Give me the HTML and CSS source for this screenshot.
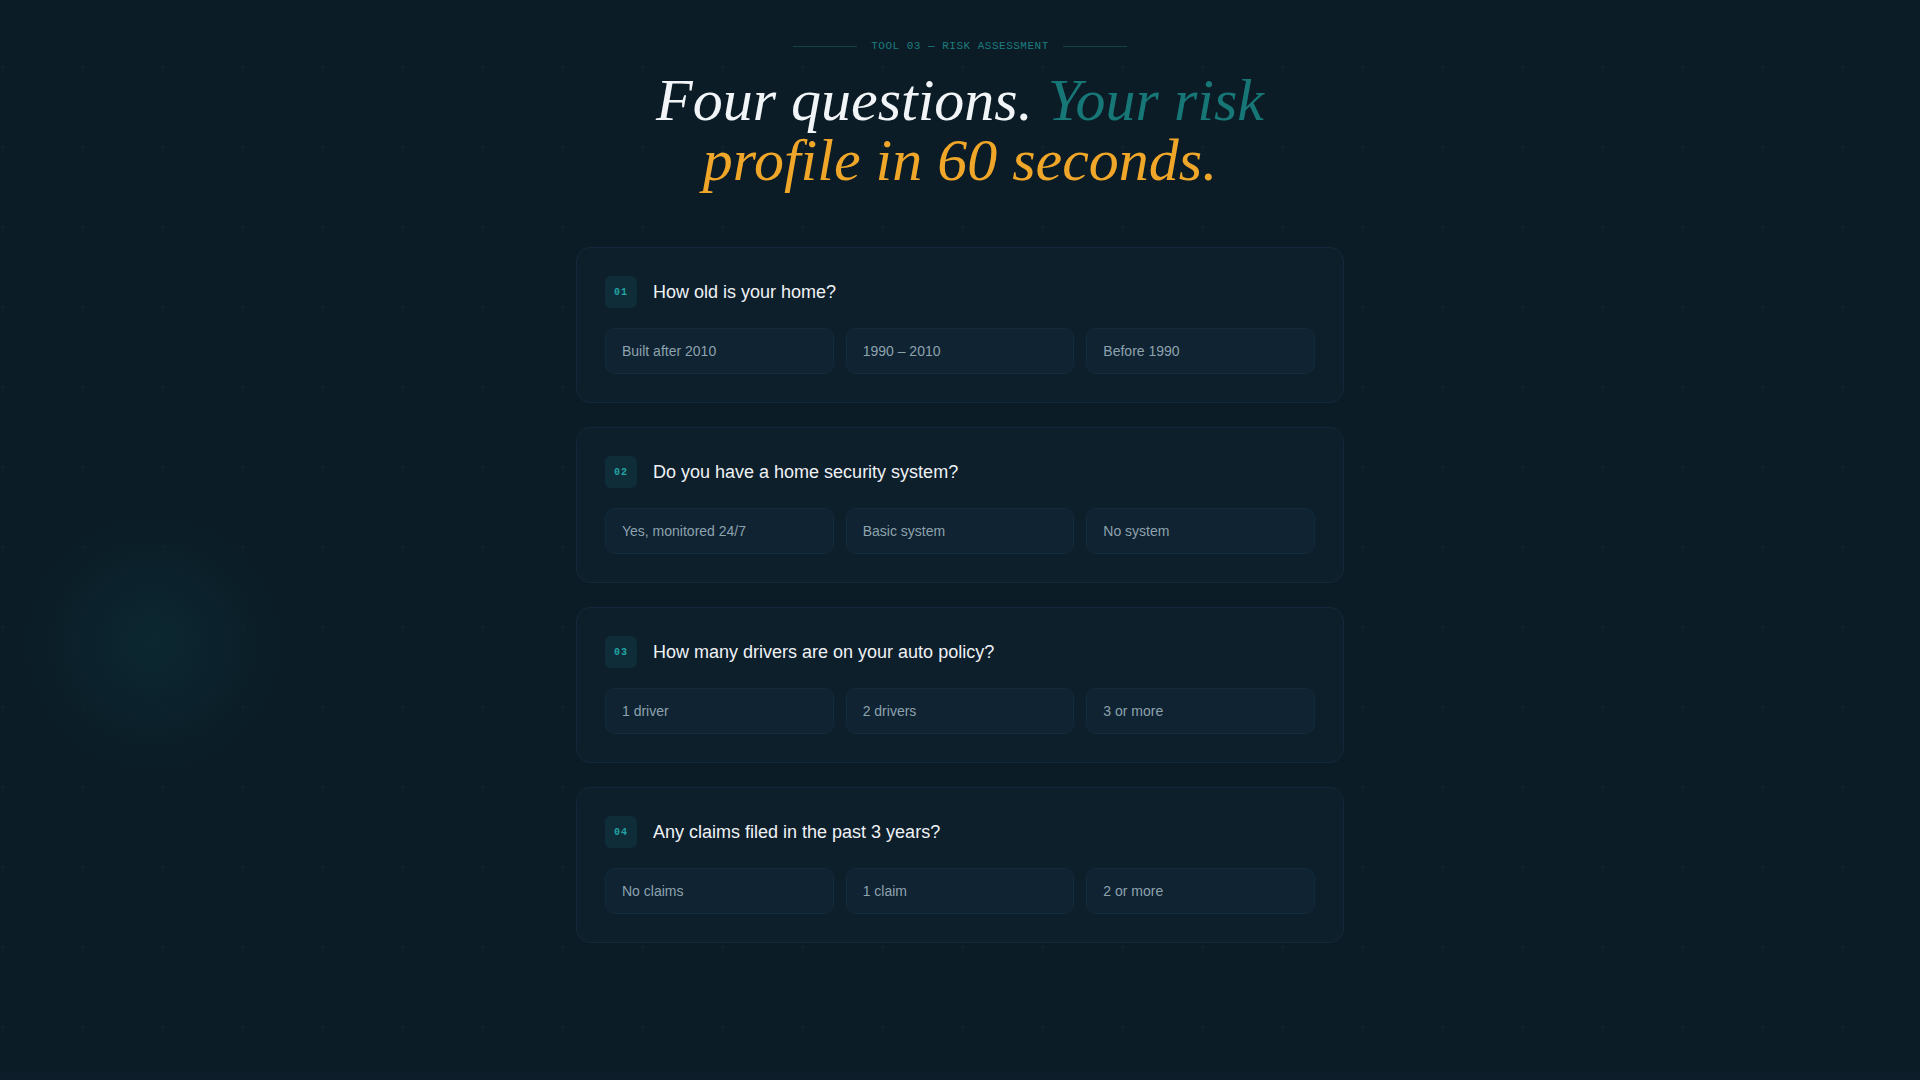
FILE: index.html
```html
<!DOCTYPE html>
<html lang="en">
<head>
<meta charset="utf-8">
<title>Risk Assessment</title>
<link rel="stylesheet" href="styles.css">
</head>
<body>
<div class="glow"></div>
<main class="page">
  <div class="eyebrow">
    <span class="eyebrow-line"></span>
    <span class="eyebrow-text">TOOL 03 — RISK ASSESSMENT</span>
    <span class="eyebrow-line"></span>
  </div>
  <h1 class="title">Four questions. <span class="teal">Your risk</span><br><span class="amber">profile in 60 seconds.</span></h1>

  <section class="quiz">
    <div class="card">
      <div class="card-head">
        <span class="badge">01</span>
        <h2 class="question">How old is your home?</h2>
      </div>
      <div class="options">
        <button class="option">Built after 2010</button>
        <button class="option">1990 – 2010</button>
        <button class="option">Before 1990</button>
      </div>
    </div>

    <div class="card">
      <div class="card-head">
        <span class="badge">02</span>
        <h2 class="question">Do you have a home security system?</h2>
      </div>
      <div class="options">
        <button class="option">Yes, monitored 24/7</button>
        <button class="option">Basic system</button>
        <button class="option">No system</button>
      </div>
    </div>

    <div class="card">
      <div class="card-head">
        <span class="badge">03</span>
        <h2 class="question">How many drivers are on your auto policy?</h2>
      </div>
      <div class="options">
        <button class="option">1 driver</button>
        <button class="option">2 drivers</button>
        <button class="option">3 or more</button>
      </div>
    </div>

    <div class="card">
      <div class="card-head">
        <span class="badge">04</span>
        <h2 class="question">Any claims filed in the past 3 years?</h2>
      </div>
      <div class="options">
        <button class="option">No claims</button>
        <button class="option">1 claim</button>
        <button class="option">2 or more</button>
      </div>
    </div>
  </section>
</main>
</body>
</html>
```

FILE: styles.css
```css
html {
  background: #0d1e2a;
}

body {
  margin: 0;
  min-height: 1072px;
  background-color: #0b1c26;
  background-image: radial-gradient(circle, rgba(40, 70, 85, 0.16) 1.2px, transparent 1.8px);
  background-size: 80px 80px;
  background-position: -37px 27px;
  font-family: "Liberation Sans", Arial, sans-serif;
  color: #e8eef2;
  position: relative;
  overflow: hidden;
}

.glow {
  position: absolute;
  left: 23px;
  top: 513px;
  width: 260px;
  height: 260px;
  border-radius: 50%;
  background: radial-gradient(circle, rgba(12, 44, 52, 0.7) 0%, rgba(12, 40, 50, 0.35) 45%, rgba(11, 28, 38, 0) 72%);
  pointer-events: none;
}

.page {
  position: relative;
  display: flex;
  flex-direction: column;
  align-items: center;
  padding-top: 38px;
}

.eyebrow {
  display: flex;
  align-items: center;
  gap: 14px;
  height: 16px;
}

.eyebrow-line {
  width: 64px;
  height: 1px;
  background: #16424a;
}

.eyebrow-text {
  font-family: "Liberation Mono", "DejaVu Sans Mono", monospace;
  font-size: 11px;
  line-height: 16px;
  letter-spacing: 0.5px;
  color: #1e7d7f;
}

.title {
  margin: 16px 0 0;
  font-family: "Liberation Serif", "Times New Roman", serif;
  font-style: italic;
  font-weight: 400;
  font-size: 60px;
  line-height: 60px;
  text-align: center;
  color: #f2f5f7;
}

.teal {
  color: #177676;
}

.amber {
  color: #f0a629;
}

.quiz {
  margin-top: 57px;
  width: 768px;
  display: flex;
  flex-direction: column;
  gap: 24px;
}

.card {
  background: #0e1f2c;
  border: 1px solid #13283a;
  border-radius: 14px;
  padding: 28px;
}

.card-head {
  display: flex;
  align-items: center;
  gap: 16px;
  margin-bottom: 20px;
}

.badge {
  width: 32px;
  height: 32px;
  border-radius: 6px;
  background: #0f2d38;
  display: flex;
  align-items: center;
  justify-content: center;
  font-family: "Liberation Mono", "DejaVu Sans Mono", monospace;
  font-weight: 700;
  font-size: 10px;
  letter-spacing: 1px;
  color: #23a3a3;
}

.question {
  margin: 0;
  font-size: 18px;
  font-weight: 400;
  line-height: 24px;
  color: #eef2f5;
}

.options {
  display: grid;
  grid-template-columns: repeat(3, 1fr);
  gap: 12px;
}

.option {
  background: #0f2332;
  border: 1px solid #132b3b;
  border-radius: 10px;
  padding: 14px 16px;
  text-align: left;
  font-family: "Liberation Sans", Arial, sans-serif;
  font-size: 14px;
  line-height: 16px;
  color: #8ea2ae;
  cursor: pointer;
}
```
